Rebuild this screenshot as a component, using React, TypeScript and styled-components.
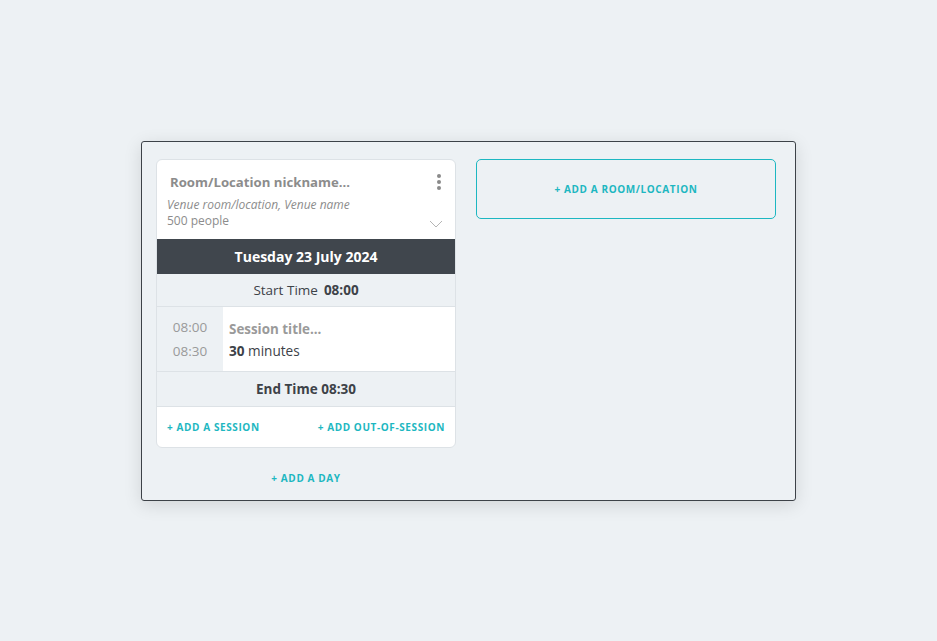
import React from 'react';
import styled, { createGlobalStyle } from 'styled-components';

const GlobalStyle = createGlobalStyle`
  html, body {
    margin: 0;
    padding: 0;
    background: #edf1f4;
    font-family: 'Open Sans', 'Noto Sans', sans-serif;
  }
`;

const teal = '#1db7c1';

const Page = styled.div`
  width: 937px;
  height: 641px;
  display: flex;
  align-items: center;
  justify-content: center;
`;

const Panel = styled.div`
  width: 655px;
  height: 360px;
  box-sizing: border-box;
  border: 1px solid #3d4248;
  border-radius: 3px;
  box-shadow: 0 4px 18px rgba(0, 0, 0, 0.12);
  padding: 17px 14px;
  display: flex;
  gap: 20px;
  align-items: flex-start;
`;

const Column = styled.div`
  width: 300px;
  display: flex;
  flex-direction: column;
  align-items: stretch;
`;

const Card = styled.div`
  background: #fff;
  border: 1px solid #dde2e6;
  border-radius: 6px;
  overflow: hidden;
`;

const Header = styled.div`
  position: relative;
  height: 79px;
  box-sizing: border-box;
  padding: 13px 10px 0 10px;
`;

const Title = styled.div`
  font-size: 13.2px;
  font-weight: 700;
  color: #8c8c8c;
  padding-left: 3px;
  line-height: 18px;
`;

const Venue = styled.div`
  margin-top: 6px;
  font-size: 12px;
  font-style: italic;
  color: #8c8c8c;
  line-height: 16px;
`;

const Capacity = styled.div`
  font-size: 12px;
  color: #8c8c8c;
  line-height: 16px;
`;

const MenuButton = styled.div`
  position: absolute;
  top: 14px;
  right: 14px;
  display: flex;
  flex-direction: column;
  gap: 2px;
  span {
    width: 4px;
    height: 4px;
    border-radius: 50%;
    background: #8a8a8a;
  }
`;

const Chevron = styled.svg`
  position: absolute;
  right: 12px;
  bottom: 11px;
`;

const DateBar = styled.div`
  height: 35px;
  background: #40464d;
  color: #fff;
  font-size: 14px;
  font-weight: 700;
  display: flex;
  align-items: center;
  justify-content: center;
`;

const TimeRow = styled.div<{ $bold?: boolean; $height: number }>`
  height: ${p => p.$height}px;
  background: #edf1f4;
  border-bottom: 1px solid #dde2e6;
  display: flex;
  align-items: center;
  justify-content: center;
  gap: 6px;
  font-size: 13.5px;
  font-weight: ${p => (p.$bold ? 700 : 400)};
  color: #3d4248;
  b { font-weight: 700; }
`;

const Session = styled.div`
  display: flex;
  height: 64px;
  border-bottom: 1px solid #dde2e6;
`;

const Times = styled.div`
  width: 66px;
  background: #edf1f4;
  display: flex;
  flex-direction: column;
  align-items: center;
  justify-content: center;
  gap: 6px;
  font-size: 13.5px;
  color: #9a9a9a;
  line-height: 18px;
`;

const SessionBody = styled.div`
  flex: 1;
  padding: 2px 6px 0 6px;
  display: flex;
  flex-direction: column;
  justify-content: center;
  gap: 4px;
  line-height: 18px;
`;

const SessionTitle = styled.div`
  font-size: 13.4px;
  font-weight: 700;
  color: #9a9a9a;
`;

const Duration = styled.div`
  font-size: 13.6px;
  color: #3d4248;
  b { font-weight: 700; }
`;

const Actions = styled.div`
  height: 40px;
  display: flex;
  align-items: center;
  justify-content: space-between;
  padding: 0 10px;
`;

const LinkButton = styled.span`
  font-size: 10px;
  font-weight: 700;
  letter-spacing: 0.6px;
  color: ${teal};
  cursor: pointer;
`;

const DayLink = styled(LinkButton)`
  text-align: center;
  margin-top: 23px;
`;

const AddRoom = styled.div`
  width: 300px;
  height: 60px;
  box-sizing: border-box;
  border: 1px solid ${teal};
  border-radius: 5px;
  display: flex;
  align-items: center;
  justify-content: center;
`;

export default function App() {
  return (
    <>
      <GlobalStyle />
      <Page>
        <Panel>
          <Column>
            <Card>
              <Header>
                <Title>Room/Location nickname...</Title>
                <Venue>Venue room/location, Venue name</Venue>
                <Capacity>500 people</Capacity>
                <MenuButton><span /><span /><span /></MenuButton>
                <Chevron width="14" height="8" viewBox="0 0 14 8">
                  <path d="M1 1l6 6 6-6" fill="none" stroke="#b5b5b5" strokeWidth="1" />
                </Chevron>
              </Header>
              <DateBar>Tuesday 23 July 2024</DateBar>
              <TimeRow $height={32}>
                Start Time <b>08:00</b>
              </TimeRow>
              <Session>
                <Times>
                  <span>08:00</span>
                  <span>08:30</span>
                </Times>
                <SessionBody>
                  <SessionTitle>Session title...</SessionTitle>
                  <Duration><b>30</b> minutes</Duration>
                </SessionBody>
              </Session>
              <TimeRow $bold $height={34}>End Time 08:30</TimeRow>
              <Actions>
                <LinkButton>+ ADD A SESSION</LinkButton>
                <LinkButton>+ ADD OUT-OF-SESSION</LinkButton>
              </Actions>
            </Card>
            <DayLink>+ ADD A DAY</DayLink>
          </Column>
          <AddRoom>
            <LinkButton>+ ADD A ROOM/LOCATION</LinkButton>
          </AddRoom>
        </Panel>
      </Page>
    </>
  );
}
